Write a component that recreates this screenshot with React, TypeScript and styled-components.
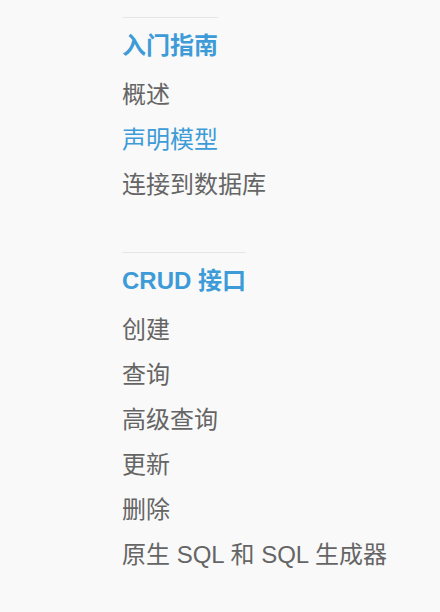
import React from "react";
import styled, { createGlobalStyle } from "styled-components";

const Global = createGlobalStyle`
  html, body {
    margin: 0;
    padding: 0;
    background: #f9f9f9;
  }
  body {
    font-family: "Liberation Sans", "Noto Sans CJK SC", sans-serif;
  }
`;

const Nav = styled.nav`
  padding: 17px 0 0 122px;
  display: flex;
  flex-direction: column;
  gap: 45px;
`;

const Section = styled.section`
  display: flex;
  flex-direction: column;
  align-items: flex-start;
`;

const Title = styled.h3`
  margin: 0;
  border-top: 1px solid #e6e6e6;
  padding-top: 5px;
  font-size: 24px;
  line-height: 45px;
  font-weight: 700;
  color: #3d9bd8;
`;

const List = styled.ul`
  list-style: none;
  margin: 4px 0 0;
  padding: 0;
`;

const Item = styled.li<{ $active?: boolean }>`
  font-size: 24px;
  line-height: 45px;
  color: ${(p) => (p.$active ? "#3d9bd8" : "#656565")};
`;

type Entry = { label: string; active?: boolean };

const sections: { title: string; items: Entry[] }[] = [
  {
    title: "入门指南",
    items: [
      { label: "概述" },
      { label: "声明模型", active: true },
      { label: "连接到数据库" },
    ],
  },
  {
    title: "CRUD 接口",
    items: [
      { label: "创建" },
      { label: "查询" },
      { label: "高级查询" },
      { label: "更新" },
      { label: "删除" },
      { label: "原生 SQL 和 SQL 生成器" },
    ],
  },
];

export default function App() {
  return (
    <>
      <Global />
      <Nav>
        {sections.map((s) => (
          <Section key={s.title}>
            <Title>{s.title}</Title>
            <List>
              {s.items.map((it) => (
                <Item key={it.label} $active={it.active}>
                  {it.label}
                </Item>
              ))}
            </List>
          </Section>
        ))}
      </Nav>
    </>
  );
}
